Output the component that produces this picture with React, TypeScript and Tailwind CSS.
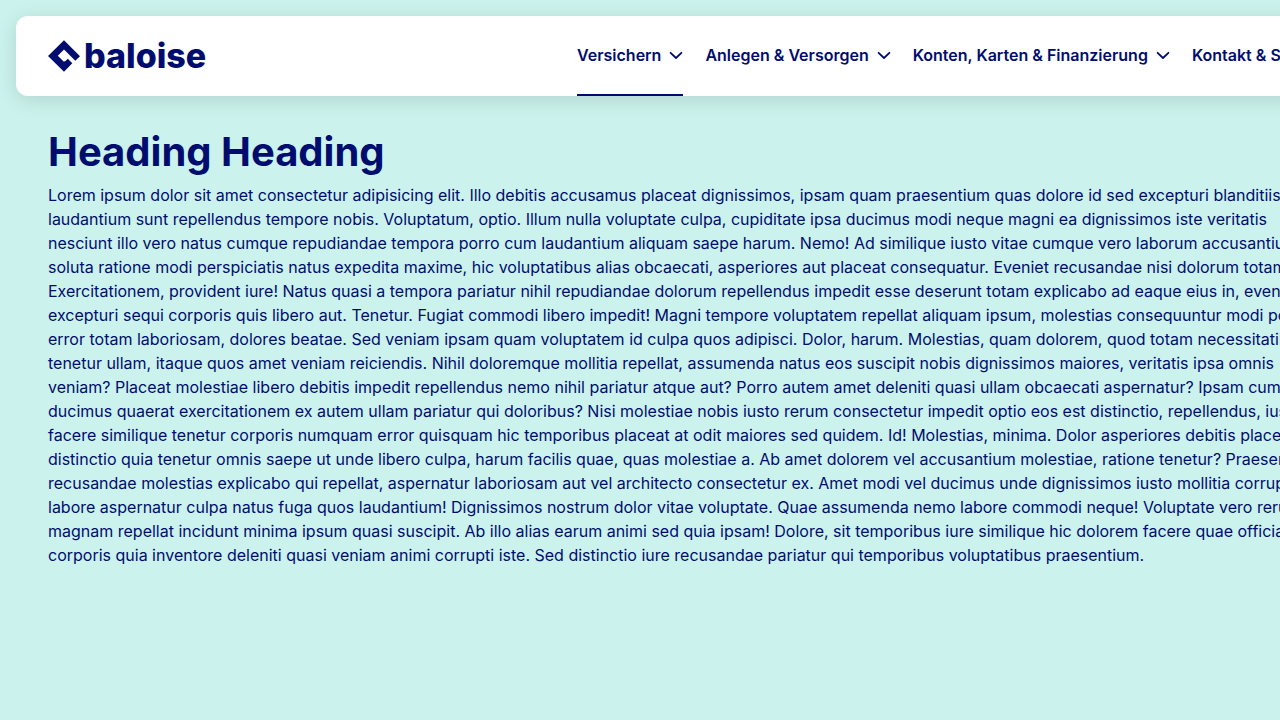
const lines = [
  'Lorem ipsum dolor sit amet consectetur adipisicing elit. Illo debitis accusamus placeat dignissimos, ipsam quam praesentium quas dolore id sed excepturi blanditiis',
  'laudantium sunt repellendus tempore nobis. Voluptatum, optio. Illum nulla voluptate culpa, cupiditate ipsa ducimus modi neque magni ea dignissimos iste veritatis',
  'nesciunt illo vero natus cumque repudiandae tempora porro cum laudantium aliquam saepe harum. Nemo! Ad similique iusto vitae cumque vero laborum accusantium',
  'soluta ratione modi perspiciatis natus expedita maxime, hic voluptatibus alias obcaecati, asperiores aut placeat consequatur. Eveniet recusandae nisi dolorum totam',
  'Exercitationem, provident iure! Natus quasi a tempora pariatur nihil repudiandae dolorum repellendus impedit esse deserunt totam explicabo ad eaque eius in, eveniet',
  'excepturi sequi corporis quis libero aut. Tenetur. Fugiat commodi libero impedit! Magni tempore voluptatem repellat aliquam ipsum, molestias consequuntur modi porro',
  'error totam laboriosam, dolores beatae. Sed veniam ipsam quam voluptatem id culpa quos adipisci. Dolor, harum. Molestias, quam dolorem, quod totam necessitatibus',
  'tenetur ullam, itaque quos amet veniam reiciendis. Nihil doloremque mollitia repellat, assumenda natus eos suscipit nobis dignissimos maiores, veritatis ipsa omnis',
  'veniam? Placeat molestiae libero debitis impedit repellendus nemo nihil pariatur atque aut? Porro autem amet deleniti quasi ullam obcaecati aspernatur? Ipsam cumque',
  'ducimus quaerat exercitationem ex autem ullam pariatur qui doloribus? Nisi molestiae nobis iusto rerum consectetur impedit optio eos est distinctio, repellendus, iusto',
  'facere similique tenetur corporis numquam error quisquam hic temporibus placeat at odit maiores sed quidem. Id! Molestias, minima. Dolor asperiores debitis placeat',
  'distinctio quia tenetur omnis saepe ut unde libero culpa, harum facilis quae, quas molestiae a. Ab amet dolorem vel accusantium molestiae, ratione tenetur? Praesentium',
  'recusandae molestias explicabo qui repellat, aspernatur laboriosam aut vel architecto consectetur ex. Amet modi vel ducimus unde dignissimos iusto mollitia corrupti',
  'labore aspernatur culpa natus fuga quos laudantium! Dignissimos nostrum dolor vitae voluptate. Quae assumenda nemo labore commodi neque! Voluptate vero rerum',
  'magnam repellat incidunt minima ipsum quasi suscipit. Ab illo alias earum animi sed quia ipsam! Dolore, sit temporibus iure similique hic dolorem facere quae officia',
  'corporis quia inventore deleniti quasi veniam animi corrupti iste. Sed distinctio iure recusandae pariatur qui temporibus voluptatibus praesentium.',
];

const items = ['Versichern', 'Anlegen & Versorgen', 'Konten, Karten & Finanzierung', 'Kontakt & Service'];

function Chevron() {
  return (
    <svg className="w-3.5 shrink-0" viewBox="0 0 14 14" fill="none" stroke="currentColor" strokeWidth="1.8" strokeLinecap="round" strokeLinejoin="round" aria-hidden="true">
      <path d="M1.6 4.8 7 10l5.4-5.2" />
    </svg>
  );
}

function Logo() {
  return (
    <a href="#" className="flex w-[529px] shrink-0 items-center gap-1">
      <svg className="size-8 shrink-0" viewBox="0 0 32 32" fill="currentColor" aria-hidden="true">
        <path d="M16 0.3 32 16.2 27.3 20.8 16 9.6 9.8 15.8 15.6 21.5 17.2 21.3 19.8 18.7 24.3 23.2 16 31.7 0 15.9Z" />
      </svg>
      <span className="text-[34px] leading-8 font-extrabold">baloise</span>
    </a>
  );
}

export default function App() {
  return (
    <div className="min-h-screen overflow-hidden bg-[#cbf2ec] font-['Inter',sans-serif] text-[#000d6e]">
      <header className="mt-4 ml-4 flex h-20 min-w-[1500px] rounded-xl bg-white px-8 shadow-[0_4px_20px_rgba(0,0,0,0.12)]">
        <Logo />
        <nav className="flex gap-[22px]">
          {items.map((label, i) => (
            <button
              key={label}
              type="button"
              className={`flex items-center gap-2 border-b-2 font-semibold whitespace-nowrap ${i === 0 ? 'border-[#000d6e]' : 'border-transparent'}`}
            >
              {label}
              <Chevron />
            </button>
          ))}
        </nav>
      </header>
      <main className="px-12 pt-8">
        <h1 className="text-[40px] leading-12 font-bold">Heading Heading</h1>
        <p className="mt-[7px] leading-6 whitespace-nowrap">
          {lines.map((line) => (
            <span key={line} className="block">{line}</span>
          ))}
        </p>
      </main>
    </div>
  );
}
